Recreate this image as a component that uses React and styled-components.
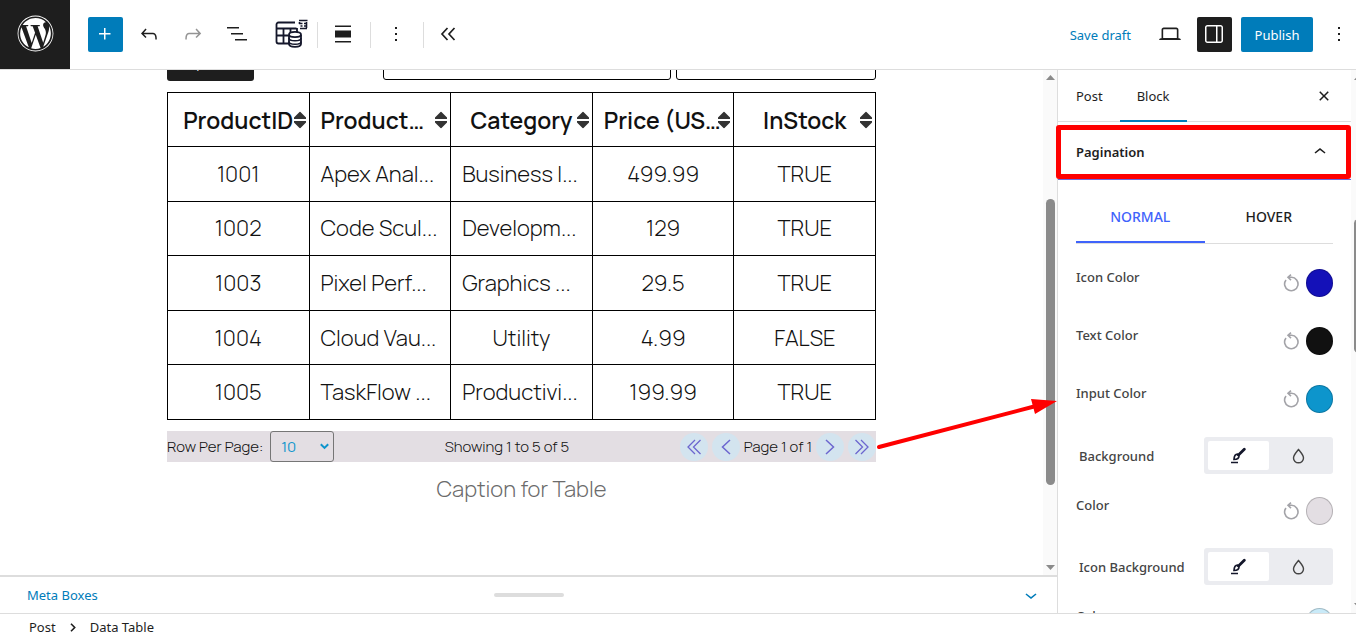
import React from "react";
import styled, { createGlobalStyle } from "styled-components";
import { FaWordpress } from "react-icons/fa";

const ui = '"Noto Sans", "Open Sans", sans-serif';
const content = 'Manrope, Inter, "Liberation Sans", sans-serif';
const blue = "#007cba";
const ink = "#1e1e1e";
const line = "#ddd";

const Global = createGlobalStyle`
  *, *::before, *::after { box-sizing: border-box; }
  body { margin: 0; background: #fff; color: ${ink}; font: 13px/18px ${ui}; }
  button, input, select { font: inherit; color: inherit; margin: 0; }
  button { border: 0; padding: 0; background: none; cursor: pointer; }
  svg { display: block; flex: none; }
`;

const Page = styled.div`
  display: flex;
  flex-direction: column;
  height: 100vh;
  overflow: hidden;
`;

/* Header */
const Header = styled.header`
  display: flex;
  align-items: center;
  height: 70px;
  flex: none;
  border-bottom: 1px solid ${line};
`;
const Logo = styled.a`
  display: flex;
  align-items: center;
  justify-content: center;
  width: 70px;
  height: 69px;
  padding-bottom: 2px;
  background: ${ink};
  color: #fff;
`;
const Tools = styled.div`
  display: flex;
  align-items: center;
  gap: 9px;
  margin-left: 18px;
`;
const IconButton = styled.button`
  display: flex;
  align-items: center;
  justify-content: center;
  width: 35px;
  height: 35px;
  padding: 0 1px 1px 0;
  border-radius: 2px;
  color: ${(p) => (p.$muted ? "#949494" : p.$fill ? "#fff" : ink)};
  background: ${(p) => p.$fill || "none"};
`;
const BlockTools = styled.div`
  display: flex;
  align-items: center;
  margin-left: 10px;
`;
const BlockTool = styled.button`
  display: flex;
  align-items: center;
  justify-content: center;
  width: ${(p) => (p.$last ? 50 : 53)}px;
  height: 26px;
  padding: 0 2px 2px 0;
  border-right: ${(p) => (p.$last ? 0 : 1)}px solid ${line};
`;
const HeaderActions = styled.div`
  display: flex;
  align-items: center;
  gap: 9px;
  margin: 0 -1px 0 auto;
`;
const DraftButton = styled.button`
  color: ${blue};
  margin-right: 13px;
`;
const Publish = styled.button`
  height: 35px;
  width: 72px;
  border-radius: 2px;
  background: ${blue};
  color: #fff;
`;

/* Main */
const Main = styled.div`
  display: flex;
  flex: 1;
  min-height: 0;
`;
const Editor = styled.main`
  display: flex;
  flex-direction: column;
  flex: 1;
  min-width: 0;
`;
const Canvas = styled.section`
  display: flex;
  flex: 1;
  min-height: 0;
  overflow: hidden;
`;
const CanvasBody = styled.div`
  flex: 1;
  min-width: 0;
  font-family: ${content};
  font-weight: 300;
`;
const Block = styled.div`
  width: 68%;
  margin: -26px auto 0;
`;
const TableTools = styled.div`
  display: flex;
  align-items: flex-end;
  height: 37px;
  margin-bottom: 11px;
  font-size: 16px;
`;
const ExportButton = styled.button`
  width: 87px;
  height: 37px;
  padding: 0 12px 4px;
  border-radius: 3px;
  background: ${ink};
  color: #fff;
  text-align: left;
`;
const SearchInput = styled.input`
  width: 288px;
  height: 36px;
  margin: 0 5px 1px auto;
  padding: 0 36px 4px;
  border: 1px solid #000;
  border-radius: 3px;
  background: #fff;
`;
const FilterSelect = styled.select`
  width: 200px;
  height: 36px;
  margin-bottom: 1px;
  appearance: none;
  border: 1px solid #000;
  border-radius: 3px;
  background: #fff;
`;
const DataTable = styled.table`
  width: 100%;
  height: 328px;
  table-layout: fixed;
  border-collapse: collapse;
  font-size: 22px;
  line-height: 32px;
  color: #111;
`;
const cell = (p) => (p.$clip ? "left" : "center");
const Th = styled.th`
  position: relative;
  height: 54px;
  padding: 0 0 0 ${(p) => (p.$clip ? 11 : 0)}px;
  border: 1px solid #000;
  font-size: 23px;
  font-weight: 600;
  text-align: ${cell};
  white-space: nowrap;
`;
const SortIcon = styled.svg`
  position: absolute;
  right: 3px;
  top: 50%;
  transform: translateY(-50%);
`;
const Td = styled.td`
  height: 54px;
  padding: 0 0 0 ${(p) => (p.$clip ? 11 : 0)}px;
  border: 1px solid #000;
  text-align: ${cell};
  white-space: nowrap;
`;
const Pager = styled.div`
  position: relative;
  display: flex;
  align-items: center;
  justify-content: space-between;
  height: 31px;
  margin-top: 11px;
  background: #e3dee3;
  color: #111;
  font-size: 15px;
  white-space: nowrap;
`;
const PagerGroup = styled.div`
  display: flex;
  align-items: center;
  gap: ${(p) => p.$gap}px;
`;
const SelectWrap = styled.span`
  position: relative;
  display: flex;
  color: #0d95cc;
`;
const RowSelect = styled.select`
  width: 64px;
  height: 31px;
  padding: 0 10px;
  appearance: none;
  border: 1px solid #767676;
  border-radius: 3px;
  background: none;
  font-size: 15px;
  font-weight: 400;
`;
const SelectArrow = styled.svg`
  position: absolute;
  right: 5px;
  top: 12px;
  pointer-events: none;
`;
const PageButton = styled.button`
  display: flex;
  align-items: center;
  justify-content: center;
  width: 28px;
  height: 28px;
  border-radius: 50%;
  background: #d3e4ef;
  color: #6c66cf;
`;
const Arrow = styled.svg`
  position: absolute;
  left: 100%;
  top: -36px;
  z-index: 2;
  pointer-events: none;
`;
const Caption = styled.p`
  margin: 11px 0 0;
  color: #6b6b6b;
  font-size: 22px;
  line-height: 32px;
  text-align: center;
`;

const Scroll = styled.div`
  display: flex;
  flex-direction: column;
  align-items: flex-start;
  flex: none;
  width: ${(p) => p.$width}px;
  padding: 5px 0 5px 3px;
  overflow: hidden;
  background: #fafafa;
  color: #8b8b8b;
`;
const Track = styled.div`
  display: flex;
  flex-direction: column;
  flex: 1;
  width: 9px;
  margin: 4px 0;
`;
const Space = styled.div`
  flex: ${(p) => p.$flex};
`;
const Thumb = styled.div`
  flex: ${(p) => p.$flex};
  border-radius: 5px;
  background: #8b8b8b;
`;

const MetaBar = styled.div`
  display: grid;
  grid-template-columns: 1fr auto 1fr;
  align-items: center;
  height: 38px;
  flex: none;
  border-top: 2px solid ${line};
  padding: 0 14px 0 27px;
  color: ${blue};
`;
const Grip = styled.div`
  width: 70px;
  height: 4px;
  margin-right: 13px;
  border-radius: 2px;
  background: ${line};
`;
const MetaButton = styled.button`
  justify-self: ${(p) => p.$side};
`;

/* Sidebar */
const Sidebar = styled.aside`
  position: relative;
  z-index: 1;
  display: flex;
  flex: none;
  width: 299px;
  border-left: 1px solid ${line};
  overflow-x: visible;
  overflow-y: clip;
`;
const Panel = styled.div`
  flex: 1;
  min-width: 0;
`;
const PanelTabs = styled.div`
  display: flex;
  align-items: center;
  height: 52px;
  padding-left: 1px;
  border-bottom: 1px solid ${line};
`;
const PanelTab = styled.button`
  height: 52px;
  padding: 2px 17px 0;
  border-bottom: 2px solid ${(p) => (p.$on ? blue : "transparent")};
`;
const CloseButton = styled.button`
  margin: 0 15px 0 auto;
`;
const SectionButton = styled.button`
  position: relative;
  display: flex;
  align-items: center;
  justify-content: space-between;
  width: 100%;
  height: 58px;
  padding: 3px 19px 0 18px;
  border-bottom: 1px solid #6a6adf;
  font-weight: 600;
  &::after {
    content: "";
    position: absolute;
    inset: 3px 0 0 -2px;
    border: 5px solid #f00;
    border-radius: 3px;
    pointer-events: none;
  }
`;
const Settings = styled.div`
  padding: 12px 18px 0 18px;
`;
const StateTabs = styled.div`
  display: flex;
  margin-bottom: 25px;
  border-bottom: 1px solid ${line};
`;
const StateTab = styled.button`
  flex: 1;
  height: 51px;
  border-bottom: 2px solid ${(p) => (p.$on ? "#3f63fb" : "transparent")};
  color: ${(p) => (p.$on ? "#3f63fb" : ink)};
  font-size: 14px;
  font-weight: 500;
`;
const ColorRow = styled.div`
  display: flex;
  justify-content: space-between;
  align-items: flex-start;
  margin-bottom: ${(p) => p.$gap}px;
  color: #444;
  font-weight: 500;
  line-height: 16px;
`;
const ColorTools = styled.div`
  display: flex;
  align-items: center;
  gap: 6px;
`;
const ResetButton = styled.button`
  color: #a3a3a8;
`;
const Swatch = styled.button`
  width: 27px;
  height: 28px;
  border-radius: 50%;
  border: 1px solid rgba(0, 0, 0, 0.2);
  background: ${(p) => p.$color};
`;
const ToggleRow = styled.div`
  display: flex;
  justify-content: space-between;
  align-items: center;
  margin-bottom: 23px;
  padding-left: 3px;
  color: #444;
  font-weight: 500;
`;
const Toggle = styled.div`
  display: flex;
  width: 129px;
  height: 37px;
  padding: 4px;
  border-radius: 3px;
  background: #ebecf0;
`;
const ToggleButton = styled.button`
  display: flex;
  align-items: center;
  justify-content: center;
  flex: 1;
  border-radius: 2px;
  background: ${(p) => (p.$on ? "#fff" : "none")};
`;

/* Footer */
const Footer = styled.footer`
  display: flex;
  align-items: center;
  gap: 14px;
  height: 26px;
  flex: none;
  padding: 1px 0 0 29px;
  border-top: 1px solid ${line};
`;

const paths = {
  plus: "M11 12.5V17.5H12.5V12.5H17.5V11H12.5V6H11V11H6V12.5H11Z",
  undo: "M18.3 11.7c-.6-.6-1.4-.9-2.3-.9H6.7l2.9-3.3-1.1-1-4.5 5L8.5 16l1-1-2.7-2.7H16c.5 0 .9.2 1.3.5 1 1 1 3.4 1 4.5v.3h1.5v-.2c0-1.5 0-4.3-1.5-5.7z",
  redo: "M15.6 6.5l-1.1 1 2.9 3.3H8c-.9 0-1.7.3-2.3.9-1.4 1.5-1.4 4.2-1.4 5.6v.2h1.5v-.3c0-1.1 0-3.5 1-4.5.3-.3.7-.5 1.3-.5h9.2L14.5 15l1.1 1.1 4.6-4.6-4.6-5z",
  list: "M2 5h12v1.5H2V5Zm4 6h12v1.5H6V11ZM22 17H10v1.5h12V17Z",
  align: "M20 5H4V3.5h16V5ZM20 20.5H4V19h16v1.5ZM4 8.5h16v7H4v-7Z",
  more: "M13 19h-2v-2h2v2zm0-6h-2v-2h2v2zm0-6h-2V5h2v2z",
  laptop: "M20.5 16h-.7V8c0-1.1-.9-2-2-2H6.2c-1.1 0-2 .9-2 2v8h-.7c-.8 0-1.5.7-1.5 1.5h20c0-.8-.7-1.5-1.5-1.5zM5.7 8c0-.3.2-.5.5-.5h11.6c.3 0 .5.2.5.5v7.6H5.7V8z",
  drawer: "M18.500 3H5.500C4.100 3 3 4.100 3 5.500v13C3 19.900 4.100 21 5.500 21h13c1.400 0 2.500-1.100 2.500-2.500v-13C21 4.100 19.900 3 18.500 3zM14 19.500H5.500c-.6 0-1-.4-1-1v-13c0-.6.4-1 1-1H14v15zm5.500-1c0 .6-.4 1-1 1h-3v-15h3c.6 0 1 .4 1 1v13z",
  close: "M12 13.06l3.712 3.713 1.061-1.06L13.061 12l3.712-3.712-1.06-1.06L12 10.938 8.288 7.227l-1.061 1.06L10.939 12l-3.712 3.712 1.06 1.061L12 13.061z",
  up: "M6.5 12.4L12 8l5.5 4.4-.9 1.2L12 10l-4.5 3.6-1-1.2z",
  down: "M17.5 11.6L12 16l-5.5-4.4.9-1.2L12 14l4.5-3.6 1 1.2z",
};
const Icon = ({ name, size = 24 }) => (
  <svg width={size} height={size} viewBox="0 0 24 24" fill="currentColor" aria-hidden="true">
    <path d={paths[name]} />
  </svg>
);
const Strokes = ({ d, w, h, sw = 1 }) => (
  <svg width={w} height={h} viewBox={`0 0 ${w} ${h}`} fill="none" stroke="currentColor" strokeWidth={sw} aria-hidden="true">
    <path d={d} />
  </svg>
);
const TableIcon = () => (
  <svg width="36" height="30" viewBox="-3 0 36 30" fill="none" stroke="#14172b" strokeWidth="1.8" aria-hidden="true">
    <path d="M20 3.5H3.500a2 2 0 0 0-2 2v17a2 2 0 0 0 2 2H14M1.500 9.5h20M1.500 16.5h12M8.500 9.5v15M15.500 9.5v6M22 9v4" />
    <g fill="#fff">
      <path d="M14 16v9c0 1.6 2.7 2.8 6 2.800s6-1.200 6-2.800v-9" />
      <ellipse cx="20" cy="15.5" rx="6" ry="2.6" />
    </g>
    <path d="M14 19c0 1.6 2.7 2.8 6 2.800s6-1.200 6-2.800M14 22.500c0 1.6 2.7 2.8 6 2.800s6-1.200 6-2.800" strokeWidth="1.5" />
    <path d="M24 1.500h8.500M24 4.500h3.500M29 4.500h3M25.500 7h2M29 7h3M25 9.500h7M24.500 3v2M31.500 3v6" strokeWidth="1.6" />
  </svg>
);
const BrushIcon = () => (
  <svg width="16" height="17" viewBox="0 0 16 17" fill="none" stroke="#14172b" aria-hidden="true">
    <path d="M14.3 2.2L8.5 8" strokeWidth="2.8" strokeLinecap="round" />
    <path d="M7.5 7.2c-2 0-3.3 1.6-3.5 5.3 3.3 0 5-1.5 5-3.7z" strokeWidth="1.7" />
    <path d="M1 15.5h7" strokeWidth="1.5" />
  </svg>
);
const DropIcon = () => (
  <svg width="13" height="16" viewBox="0 0 13 16" fill="none" stroke="#444" strokeWidth="1.4" aria-hidden="true">
    <path d="M6.5 1.500C4.500 4 1.500 7 1.500 10a5 4.800 0 0 0 10 0C11.500 7 8.500 4 6.500 1.500z" />
  </svg>
);
const ResetIcon = () => (
  <svg width="17" height="18" viewBox="0 0 17 18" fill="none" stroke="currentColor" strokeWidth="1.6" aria-hidden="true">
    <path d="M5 3.300H8.500A6.700 6.700 0 1 1 3 5.900" />
    <path d="M8 .6L5 3.300l3 2.900" />
  </svg>
);
const ScrollArrow = ({ down }) => (
  <svg width="9" height="5" viewBox="0 0 9 5" fill="currentColor" aria-hidden="true">
    <path d={down ? "M0 0h9L4.5 5z" : "M0 5h9L4.5 0z"} />
  </svg>
);

const columns = ["ProductID", "Product…", "Category", "Price (US…", "InStock"];
const rows = [
  ["1001", "Apex Anal...", "Business I...", "499.99", "TRUE"],
  ["1002", "Code Scul...", "Developm...", "129", "TRUE"],
  ["1003", "Pixel Perf...", "Graphics ...", "29.5", "TRUE"],
  ["1004", "Cloud Vau...", "Utility", "4.99", "FALSE"],
  ["1005", "TaskFlow ...", "Productivi...", "199.99", "TRUE"],
];
const clipped = (t) => /(\.\.\.|…)$/.test(t);

const ColorSetting = ({ label, color, gap }) => (
  <ColorRow $gap={gap}>
    <span>{label}</span>
    <ColorTools>
      <ResetButton aria-label={`Reset ${label}`}><ResetIcon /></ResetButton>
      <Swatch $color={color} aria-label={label} />
    </ColorTools>
  </ColorRow>
);
const BackgroundSetting = ({ label }) => (
  <ToggleRow>
    <span>{label}</span>
    <Toggle role="group" aria-label={label}>
      <ToggleButton $on aria-label="Classic"><BrushIcon /></ToggleButton>
      <ToggleButton aria-label="Gradient"><DropIcon /></ToggleButton>
    </Toggle>
  </ToggleRow>
);

export default function App() {
  return (
    <Page>
      <Global />
      <Header>
        <Logo href="#" aria-label="View posts"><FaWordpress size={37} /></Logo>
        <Tools>
          <IconButton $fill={blue} aria-label="Add block"><Icon name="plus" /></IconButton>
          <IconButton aria-label="Undo"><Icon name="undo" /></IconButton>
          <IconButton $muted aria-label="Redo"><Icon name="redo" /></IconButton>
          <IconButton aria-label="Document overview"><Icon name="list" /></IconButton>
        </Tools>
        <BlockTools>
          <BlockTool aria-label="Data Table"><TableIcon /></BlockTool>
          <BlockTool aria-label="Align"><Icon name="align" /></BlockTool>
          <BlockTool aria-label="Options"><Icon name="more" /></BlockTool>
          <BlockTool $last aria-label="Hide block tools">
            <Strokes w={16} h={14} sw={1.7} d="M7.5 1L2 7l5.5 6M14.5 1L9 7l5.5 6" />
          </BlockTool>
        </BlockTools>
        <HeaderActions>
          <DraftButton>Save draft</DraftButton>
          <IconButton aria-label="Preview"><Icon name="laptop" size={26} /></IconButton>
          <IconButton $fill={ink} aria-label="Settings"><Icon name="drawer" /></IconButton>
          <Publish>Publish</Publish>
          <IconButton aria-label="More options"><Icon name="more" /></IconButton>
        </HeaderActions>
      </Header>

      <Main>
        <Editor>
          <Canvas>
            <CanvasBody>
              <Block>
                <TableTools>
                  <ExportButton>Export</ExportButton>
                  <SearchInput aria-label="Search" placeholder="Type" />
                  <FilterSelect aria-label="Filter" />
                </TableTools>
                <DataTable>
                  <thead>
                    <tr>
                      {columns.map((c) => (
                        <Th key={c} $clip={clipped(c)}>
                          {c}
                          <SortIcon width="12" height="17" viewBox="0 0 12 17" fill="#333">
                            <path d="M6 0l6 6v1.5H0V6zM0 9.500h12V11l-6 6-6-6z" />
                          </SortIcon>
                        </Th>
                      ))}
                    </tr>
                  </thead>
                  <tbody>
                    {rows.map((r) => (
                      <tr key={r[0]}>
                        {r.map((t, i) => <Td key={i} $clip={clipped(t)}>{t}</Td>)}
                      </tr>
                    ))}
                  </tbody>
                </DataTable>
                <Pager>
                  <PagerGroup $gap={7}>
                    <label htmlFor="rows">Row Per Page:</label>
                    <SelectWrap>
                      <RowSelect id="rows"><option>10</option></RowSelect>
                      <SelectArrow width="9" height="7" viewBox="0 0 9 7" fill="none" stroke="currentColor" strokeWidth="2">
                        <path d="M.8 1.2l3.700 3.700 3.700-3.700" />
                      </SelectArrow>
                    </SelectWrap>
                  </PagerGroup>
                  <span>Showing 1 to 5 of 5</span>
                  <PagerGroup $gap={4}>
                    <PageButton aria-label="First page"><Strokes w={14} h={16} sw={1.3} d="M8 1L1 8l7 7M13.5 1l-7 7 7 7" /></PageButton>
                    <PageButton aria-label="Previous page"><Strokes w={10} h={16} sw={1.5} d="M9 1L1.5 8 9 15" /></PageButton>
                    <span>Page 1 of 1</span>
                    <PageButton aria-label="Next page"><Strokes w={10} h={16} sw={1.5} d="M1 1l7.5 7L1 15" /></PageButton>
                    <PageButton aria-label="Last page"><Strokes w={14} h={16} sw={1.3} d="M.5 1l7 7-7 7M6 1l7 7-7 7" /></PageButton>
                  </PagerGroup>
                  <Arrow width="182" height="56" viewBox="0 0 182 56" fill="#f00">
                    <path d="M3 52L160 11" stroke="#f00" strokeWidth="4" strokeLinecap="round" />
                    <path d="M181 6L155 4l4 15z" />
                  </Arrow>
                </Pager>
                <Caption>Caption for Table</Caption>
              </Block>
            </CanvasBody>
            <Scroll $width={14}>
              <ScrollArrow />
              <Track>
                <Space $flex={115} /><Thumb $flex={286} /><Space $flex={76} />
              </Track>
              <ScrollArrow down />
            </Scroll>
          </Canvas>
          <MetaBar>
            <MetaButton $side="start">Meta Boxes</MetaButton>
            <Grip />
            <MetaButton $side="end" aria-label="Toggle meta boxes"><Icon name="down" /></MetaButton>
          </MetaBar>
        </Editor>

        <Sidebar>
          <Panel>
            <PanelTabs>
              <PanelTab>Post</PanelTab>
              <PanelTab $on>Block</PanelTab>
              <CloseButton aria-label="Close settings"><Icon name="close" /></CloseButton>
            </PanelTabs>
            <SectionButton aria-expanded="true">Pagination<Icon name="up" /></SectionButton>
            <Settings>
              <StateTabs>
                <StateTab $on>NORMAL</StateTab>
                <StateTab>HOVER</StateTab>
              </StateTabs>
              <ColorSetting label="Icon Color" color="#1411b8" gap={30} />
              <ColorSetting label="Text Color" color="#111" gap={30} />
              <ColorSetting label="Input Color" color="#0d95cc" gap={24} />
              <BackgroundSetting label="Background" />
              <ColorSetting label="Color" color="#e3dee3" gap={23} />
              <BackgroundSetting label="Icon Background" />
              <ColorSetting label="Color" color="#c9eaf8" gap={23} />
            </Settings>
          </Panel>
          <Scroll $width={5}>
            <ScrollArrow />
            <Track>
              <Space $flex={135} /><Thumb $flex={134} /><Space $flex={246} />
            </Track>
            <ScrollArrow down />
          </Scroll>
        </Sidebar>
      </Main>

      <Footer>
        <span>Post</span>
        <Strokes w={6} h={9} sw={1.6} d="M1 .8l3.7 3.7L1 8.200" />
        <span>Data Table</span>
      </Footer>
    </Page>
  );
}
